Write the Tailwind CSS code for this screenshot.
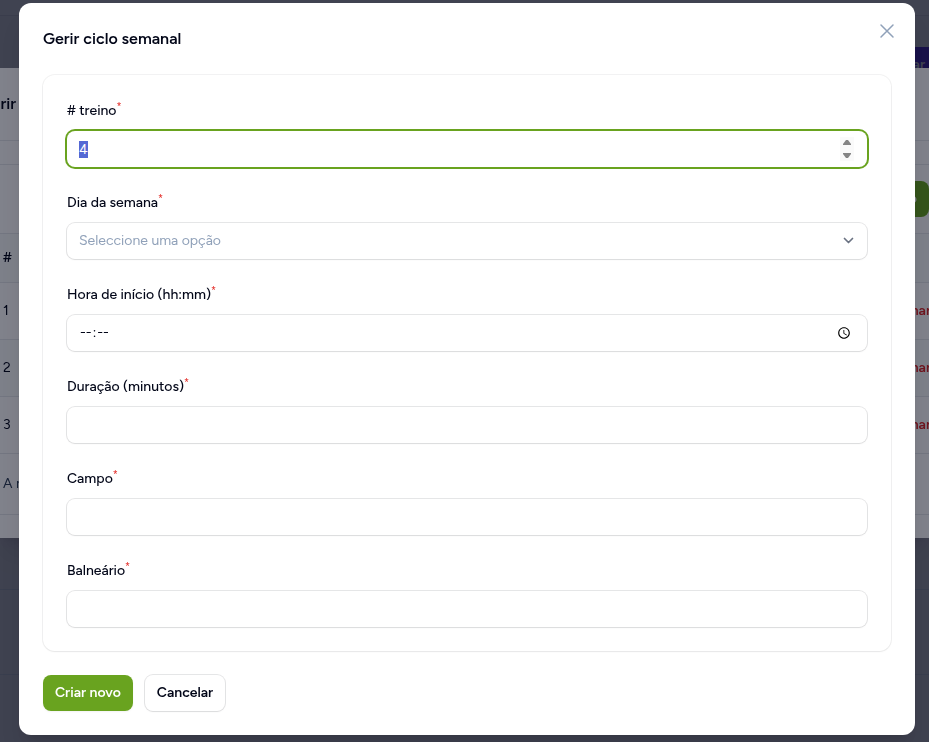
<!DOCTYPE html>
<html lang="pt">

<head>
    <meta charset="UTF-8">
    <meta name="viewport" content="width=device-width, initial-scale=1.0">
    <title>Gerir ciclo semanal</title>
    <script src="https://cdn.jsdelivr.net/npm/@tailwindcss/browser@4"></script>
</head>

<body class="h-screen overflow-hidden bg-gray-50 font-['Figtree','Inter',sans-serif] text-sm text-slate-950">

    <!-- página -->
    <div class="h-screen">
        <div class="h-4 border-b border-gray-200 bg-white"></div>
        <div class="flex h-[574px] justify-end border-b border-slate-200 pt-[31px]">
            <button class="h-9 w-[60px] bg-[#6038e0] pr-1 text-right font-semibold text-white">Criar</button>
        </div>
        <div class="h-[85px] border-b border-slate-200"></div>
    </div>

    <!-- primeiro modal -->
    <div class="fixed inset-0 bg-slate-950/50 pt-[68px]">
        <div class="overflow-hidden bg-white shadow-xl">
            <div class="flex h-[72px] items-center">
                <h2 class="flex w-4 justify-end overflow-hidden text-base font-semibold">Gerir</h2>
            </div>
            <div class="h-[25px] border-y border-gray-200"></div>
            <div class="flex h-[68px] items-center justify-end">
                <button class="h-9 rounded-lg bg-[#69a31f] px-3 font-semibold text-white">Criar novo</button>
            </div>
            <table class="w-[calc(100%+2px)] border-y border-gray-200">
                <thead>
                    <tr class="h-[49px] bg-gray-50">
                        <th class="pl-[3px] text-left font-semibold">#</th>
                        <th></th>
                    </tr>
                </thead>
                <tbody>
                    <tr class="h-[57px] border-t border-gray-200">
                        <td class="pl-[3px]">1</td>
                        <td class="text-right font-semibold text-[#dc2626]"><a href="#">Eliminar</a></td>
                    </tr>
                    <tr class="h-[57px] border-t border-gray-200 bg-gray-50">
                        <td class="pl-[3px]">2</td>
                        <td class="text-right font-semibold text-[#dc2626]"><a href="#">Eliminar</a></td>
                    </tr>
                    <tr class="h-[57px] border-t border-gray-200">
                        <td class="pl-[3px]">3</td>
                        <td class="text-right font-semibold text-[#dc2626]"><a href="#">Eliminar</a></td>
                    </tr>
                </tbody>
            </table>
            <div class="flex h-[61px] items-center border-b border-gray-200 pl-[3px] text-slate-700">A mostrar</div>
            <div class="h-[23px]"></div>
        </div>
    </div>

    <!-- segundo modal -->
    <div class="fixed inset-0 flex items-start justify-center bg-slate-950/50 pt-[3px] pr-[14px] pl-[19px]">
        <form class="relative flex w-full max-w-4xl flex-col gap-6 rounded-xl bg-white p-6 shadow-xl">
            <h2 class="text-base font-semibold">Gerir ciclo semanal</h2>
            <button type="button" aria-label="Fechar" class="absolute top-4 right-4 text-slate-400">
                <svg class="size-6" fill="none" viewBox="0 0 24 24" stroke-width="1.5" stroke="currentColor">
                    <path stroke-linecap="round" stroke-linejoin="round" d="M6 18 18 6M6 6l12 12" />
                </svg>
            </button>

            <section class="flex flex-col gap-6 rounded-xl p-6 shadow-xs ring-1 ring-slate-950/5">
                <div class="flex flex-col gap-2">
                    <label for="treino" class="text-sm/6 font-medium"># treino<sup class="text-[#e53935]">*</sup></label>
                    <div class="relative">
                        <input id="treino" type="number" value="4" autofocus class="h-9 w-full rounded-lg px-3 text-sm/6 text-slate-950 shadow-xs ring-1 ring-slate-950/10 outline-none selection:bg-[#5468d4] selection:text-white focus:ring-2 focus:ring-[#69a31f] [&::-webkit-inner-spin-button]:appearance-none">
                        <svg class="pointer-events-none absolute top-1.5 right-3 h-6 w-4" viewBox="0 0 16 24">
                            <rect width="14" height="24" x="1" fill="#fafafa" />
                            <path fill="#858585" d="M4 8V7l3-4h2l3 4v1zM4 16v1l3 4h2l3-4v-1z" />
                        </svg>
                    </div>
                </div>
                <div class="flex flex-col gap-2">
                    <label for="dia" class="text-sm/6 font-medium">Dia da semana<sup class="text-[#e53935]">*</sup></label>
                    <div class="relative">
                        <select id="dia" class="h-9 w-full appearance-none rounded-lg px-3 text-sm text-slate-400 shadow-xs ring-1 ring-slate-950/10 outline-none">
                            <option>Seleccione uma opção</option>
                        </select>
                        <svg class="pointer-events-none absolute top-2 right-2 size-5 text-gray-500" fill="none" viewBox="0 0 20 20" stroke="currentColor">
                            <path stroke-linecap="round" stroke-linejoin="round" stroke-width="1.7" d="M5.500 7.500l4 4L13.500 7.500" />
                        </svg>
                    </div>
                </div>
                <div class="flex flex-col gap-2">
                    <label for="hora" class="text-sm/6 font-medium">Hora de início (hh:mm)<sup class="text-[#e53935]">*</sup></label>
                    <input id="hora" type="time" class="h-9 rounded-lg px-3 text-sm/6 text-slate-950 shadow-xs ring-1 ring-slate-950/10 outline-none [&::-webkit-datetime-edit-ampm-field]:hidden">
                </div>
                <div class="flex flex-col gap-2">
                    <label for="duracao" class="text-sm/6 font-medium">Duração (minutos)<sup class="text-[#e53935]">*</sup></label>
                    <input id="duracao" type="number" class="h-9 rounded-lg px-3 text-sm/6 shadow-xs ring-1 ring-slate-950/10 outline-none">
                </div>
                <div class="flex flex-col gap-2">
                    <label for="campo" class="text-sm/6 font-medium">Campo<sup class="text-[#e53935]">*</sup></label>
                    <input id="campo" type="text" class="h-9 rounded-lg px-3 text-sm/6 shadow-xs ring-1 ring-slate-950/10 outline-none">
                </div>
                <div class="flex flex-col gap-2">
                    <label for="balneario" class="text-sm/6 font-medium">Balneário<sup class="text-[#e53935]">*</sup></label>
                    <input id="balneario" type="text" class="h-9 rounded-lg px-3 text-sm/6 shadow-xs ring-1 ring-slate-950/10 outline-none">
                </div>
            </section>

            <div class="flex gap-3">
                <button type="submit" class="h-9 rounded-lg bg-[#69a31f] px-3 font-semibold text-white shadow-xs">Criar novo</button>
                <button type="button" class="h-9 rounded-lg bg-white px-3 font-semibold shadow-xs ring-1 ring-slate-950/10">Cancelar</button>
            </div>
        </form>
    </div>

    <script>
        var treino = document.getElementById('treino');
        treino.focus();
        treino.select();
    </script>
</body>

</html>
